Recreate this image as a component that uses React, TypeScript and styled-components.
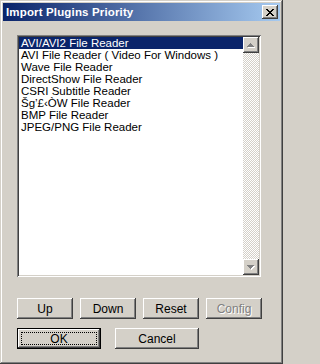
import React from 'react';
import styled, { createGlobalStyle } from 'styled-components';

const GlobalStyle = createGlobalStyle`
  html, body {
    margin: 0;
    padding: 0;
    background: #d4d0c8;
  }
  * {
    box-sizing: border-box;
  }
`;

const Win = styled.div`
  width: 283px;
  height: 364px;
  background: #d4d0c8;
  padding: 3px;
  display: flex;
  flex-direction: column;
  font-family: "Liberation Sans", Arial, sans-serif;
  font-size: 12px;
  box-shadow: inset -1px -1px #404040, inset 1px 1px #d4d0c8,
    inset -2px -2px #808080, inset 2px 2px #ffffff;
`;

const TitleBar = styled.div`
  height: 18px;
  display: flex;
  align-items: center;
  justify-content: space-between;
  padding: 0 2px 0 3px;
  background: linear-gradient(to right, #0a246a, #a6caf0);
`;

const TitleText = styled.span`
  color: #ffffff;
  font-weight: bold;
  font-size: 11.5px;
  letter-spacing: 0.15px;
  white-space: nowrap;
`;

const raised = `
  background: #d4d0c8;
  box-shadow: inset -1px -1px #404040, inset 1px 1px #ffffff,
    inset -2px -2px #808080, inset 2px 2px #d4d0c8;
`;

const CloseBtn = styled.div`
  width: 16px;
  height: 14px;
  display: flex;
  align-items: center;
  justify-content: center;
  ${raised}
  svg {
    display: block;
  }
`;

const Body = styled.div`
  flex: 1;
  display: flex;
  flex-direction: column;
  padding: 14px 0 0 14px;
`;

const ListBox = styled.div`
  width: 244px;
  height: 242px;
  padding: 2px;
  display: flex;
  background: #ffffff;
  box-shadow: inset 1px 1px #808080, inset -1px -1px #ffffff,
    inset 2px 2px #404040, inset -2px -2px #d4d0c8;
`;

const Items = styled.div`
  flex: 1;
  display: flex;
  flex-direction: column;
  background: #ffffff;
`;

const Item = styled.div<{ $selected?: boolean }>`
  height: 12px;
  line-height: 12px;
  padding-left: 2px;
  white-space: nowrap;
  overflow: hidden;
  font-size: 11.5px;
  color: ${(p) => (p.$selected ? '#ffffff' : '#000000')};
  background: ${(p) => (p.$selected ? '#0a246a' : 'transparent')};
`;

const ScrollBar = styled.div`
  width: 16px;
  display: flex;
  flex-direction: column;
`;

const ScrollBtn = styled.div`
  width: 16px;
  height: 16px;
  display: flex;
  align-items: center;
  justify-content: center;
  ${raised}
`;

const Track = styled.div`
  flex: 1;
  background-color: #ffffff;
  background-image: conic-gradient(
    #d4d0c8 0 25%,
    #ffffff 0 50%,
    #d4d0c8 0 75%,
    #ffffff 0
  );
  background-size: 2px 2px;
`;

const ButtonRow = styled.div<{ $gap: number; $top: number }>`
  display: flex;
  gap: ${(p) => p.$gap}px;
  margin-top: ${(p) => p.$top}px;
`;

const Button = styled.div<{ $w: number; $disabled?: boolean }>`
  width: ${(p) => p.$w}px;
  height: 21px;
  display: flex;
  align-items: center;
  justify-content: center;
  font-size: 12px;
  ${raised}
  color: ${(p) => (p.$disabled ? '#808080' : '#000000')};
  text-shadow: ${(p) => (p.$disabled ? '1px 1px #ffffff' : 'none')};
`;

const DefaultButton = styled.div<{ $w: number }>`
  width: ${(p) => p.$w}px;
  height: 21px;
  display: flex;
  align-items: center;
  justify-content: center;
  font-size: 12px;
  color: #000000;
  background: #d4d0c8;
  border: 1px solid #000000;
  box-shadow: inset -1px -1px #404040, inset 1px 1px #ffffff,
    inset -2px -2px #808080;
  position: relative;
`;

const FocusRect = styled.span`
  position: absolute;
  left: 3px;
  top: 3px;
  right: 3px;
  bottom: 3px;
  border: 1px dotted #000000;
`;

const Arrow: React.FC<{ down?: boolean }> = ({ down }) => (
  <svg width="8" height="5" viewBox="0 0 8 5" shapeRendering="crispEdges">
    {down ? (
      <>
        <path d="M1 1h7v1h-1v1h-1v1h-1v1h-1v-1h-1v-1h-1v-1h-1z" fill="#ffffff" />
        <path d="M0 0h7v1h-1v1h-1v1h-1v1h-1v-1h-1v-1h-1v-1h-1z" fill="#808080" />
      </>
    ) : (
      <>
        <path d="M1 5h7v-1h-1v-1h-1v-1h-1v-1h-1v1h-1v1h-1v1h-1z" fill="#ffffff" />
        <path d="M0 4h7v-1h-1v-1h-1v-1h-1v-1h-1v1h-1v1h-1v1h-1z" fill="#808080" />
      </>
    )}
  </svg>
);

const CloseIcon = () => (
  <svg width="8" height="7" viewBox="0 0 8 7" shapeRendering="crispEdges">
    <path
      d="M0 0h2v1h1v1h2v-1h1v-1h2v1h-1v1h-1v1h-1v1h1v1h1v1h1v1h-2v-1h-1v-1h-2v1h-1v1h-2v-1h1v-1h1v-1h1v-1h-1v-1h-1v-1h-1z"
      fill="#000000"
    />
  </svg>
);

const plugins = [
  'AVI/AVI2 File Reader',
  'AVI File Reader ( Video For Windows )',
  'Wave File Reader',
  'DirectShow File Reader',
  'CSRI Subtitle Reader',
  'Šg’£‹ÒW File Reader',
  'BMP File Reader',
  'JPEG/PNG File Reader',
];

export default function App() {
  return (
    <>
      <GlobalStyle />
      <Win>
        <TitleBar>
          <TitleText>Import Plugins Priority</TitleText>
          <CloseBtn>
            <CloseIcon />
          </CloseBtn>
        </TitleBar>
        <Body>
          <ListBox>
            <Items>
              {plugins.map((name, i) => (
                <Item key={name} $selected={i === 0}>
                  {name}
                </Item>
              ))}
            </Items>
            <ScrollBar>
              <ScrollBtn>
                <Arrow />
              </ScrollBtn>
              <Track />
              <ScrollBtn>
                <Arrow down />
              </ScrollBtn>
            </ScrollBar>
          </ListBox>
          <ButtonRow $gap={7} $top={21}>
            <Button $w={56}>Up</Button>
            <Button $w={56}>Down</Button>
            <Button $w={56}>Reset</Button>
            <Button $w={56} $disabled>
              Config
            </Button>
          </ButtonRow>
          <ButtonRow $gap={14} $top={9}>
            <DefaultButton $w={84}>
              <FocusRect />
              OK
            </DefaultButton>
            <Button $w={84}>Cancel</Button>
          </ButtonRow>
        </Body>
      </Win>
    </>
  );
}
